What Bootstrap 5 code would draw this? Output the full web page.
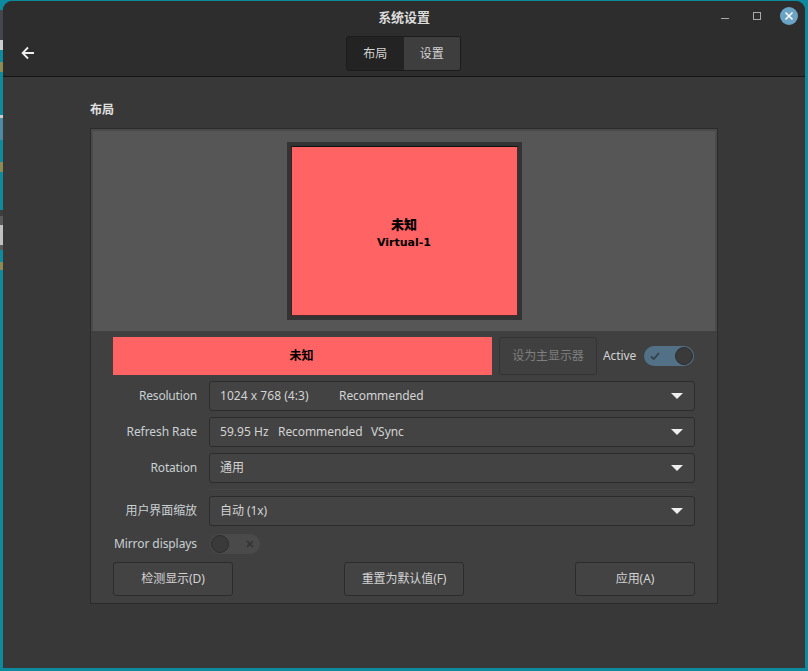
<!DOCTYPE html>
<html lang="zh">
<head>
<meta charset="utf-8">
<title>系统设置</title>
<link href="https://cdn.jsdelivr.net/npm/bootstrap@5.3.0/dist/css/bootstrap.min.css" rel="stylesheet">
<style>
html,body{height:671px;overflow:hidden}
body{background:linear-gradient(#0e8a9e 0 10px,#43464f 10px 40px,#c9cdd0 40px 50px,#0e8a9e 50px 62px,#8d8a55 62px 72px,#0e8a9e 72px 115px,#c9cdd0 115px 118px,#4f8aa5 118px 140px,#0e8a9e 140px 162px,#8d8a55 162px 172px,#0e8a9e 172px 210px,#3d3d3d 210px 216px,#5a5a5a 216px 225px,#c0c0c0 225px 245px,#5a5a5a 245px 250px,#0e8a9e 250px 262px,#8d8a55 262px 270px,#0e8a9e 270px) left top/3px 100% no-repeat #0e8a9e;font-family:"Noto Sans","Noto Sans CJK SC",sans-serif;font-size:12px;letter-spacing:-.08px;color:#d3d3d3;padding:1px 3px 3px 3px}
.win{height:667px;background:#383838;border-radius:9px 9px 0 0;overflow:hidden}
.hdr{height:76px;background:#2d2d2d;border-bottom:1px solid #141414;position:relative}
.ttl{font-weight:700;font-size:13px;color:#dcdcdc;padding-top:6px;line-height:20px}
.seg{width:115px;height:35px;margin:9px 0 0 343px;background:#232323;border:1px solid #1c1c1c;border-radius:3px;overflow:hidden}
.seg-i{flex:1 1 0;color:#d3d3d3}
.seg-on{background:#3e3e3e}
.back{position:absolute;left:18px;top:45px}
.wbtns{position:absolute;right:0;top:0}
.mn{position:absolute;left:87px;top:100px;font-weight:700;color:#e0e0e0;line-height:18px}
.pnl{position:absolute;left:87px;top:127px;width:628px;height:476px;background:#404040;border:1px solid #2b2b2b}
.prev{height:202px;background:#565656;border:2px solid #4a4a4a;border-bottom:0;padding-top:11px}
.mon{width:235px;height:178px;background:#333;padding:4px}
.scr{height:100%;background:#ff6363;border-style:solid;border-width:1px;border-color:#111 #4a2a2a #4a2a2a #3a2020;color:#000;font-weight:700}
.scr b{font-size:13px;line-height:24px;letter-spacing:0}
.scr i{font-style:normal;font-size:11px;line-height:14px;letter-spacing:0;font-family:"DejaVu Sans",sans-serif}
.body-p{padding:6px 22px 0 22px}
.bar{width:379px;height:38px;padding-right:2px;background:#ff6363;color:#000;font-weight:700}
.btnx{background:#434343;border:1px solid #2c2c2c;border-radius:3px;color:#d3d3d3;font-size:12px;padding:0;letter-spacing:inherit}
.pri{width:98px;height:38px;margin-left:7px;background:#404040;color:#7f7f7f;border-color:#333}
.act{margin-left:6px;width:41px}
.sw{width:50px;height:20px;border-radius:10px;position:relative}
.sw-on{background:#527186}
.sw-off{background:#4a4a4a;margin-left:1px}
.kn{position:absolute;top:1px;width:18px;height:18px;border-radius:50%;background:#3a3a3a;border:1px solid #2c2c2c}
.rw{height:30px}
.lb{width:84px;text-align:right;color:#c9d0d3;margin-right:12px;white-space:nowrap}
.lb-t{letter-spacing:-.18px}
.num{letter-spacing:.04px}
.sel{width:486px;height:30px;background:#434343;border:1px solid #2c2c2c;border-radius:3px;padding:0 11px 0 10px;color:#d3d3d3}
.tri{width:0;height:0;border-left:6px solid transparent;border-right:6px solid transparent;border-top:6px solid #eee}
.act-b{width:120px;height:34px}
.rule{height:1px;background:#474747;margin:6px 0 6px 96px}
</style>
</head>
<body>
<div class="win position-relative">
  <div class="hdr text-center">
    <div class="ttl">系统设置</div>
    <div class="seg d-flex">
      <div class="seg-i d-flex align-items-center justify-content-center">布局</div>
      <div class="seg-i seg-on d-flex align-items-center justify-content-center">设置</div>
    </div>
    <svg class="back" width="14" height="14" viewBox="0 0 14 14" fill="none" stroke="#eee" stroke-width="1.8"><path d="M13 7H2M7 1.5 1.6 7 7 12.5"/></svg>
    <svg class="wbtns" width="100" height="30" viewBox="0 0 100 30" fill="none">
      <path d="M16 17.5h8" stroke="#a8a8a8" stroke-width="1"/>
      <rect x="48.5" y="11.5" width="7" height="7" stroke="#a8a8a8"/>
      <circle cx="84" cy="15" r="9" fill="#6ba3c5"/>
      <path d="M80.5 11.5l7 7M87.5 11.5l-7 7" stroke="#fff" stroke-width="1.5"/>
    </svg>
  </div>
  <div class="mn">布局</div>
  <div class="pnl">
    <div class="prev"><div class="mon mx-auto"><div class="scr d-flex flex-column align-items-center justify-content-center"><b>未知</b><i>Virtual-1</i></div></div></div>
    <div class="body-p">
      <div class="d-flex align-items-center">
        <div class="bar d-flex align-items-center justify-content-center">未知</div>
        <button class="btnx pri" disabled>设为主显示器</button>
        <div class="act">Active</div>
        <div class="sw sw-on">
          <svg class="position-absolute" style="left:6px;top:5px" width="10" height="10" viewBox="0 0 10 10" fill="none" stroke="#33414b" stroke-width="1.8"><path d="M1 5.5 3.8 8 9 2"/></svg>
          <span class="kn" style="right:1px"></span>
        </div>
      </div>
      <div class="rw d-flex align-items-center" style="margin-top:6px">
        <div class="lb lb-t">Resolution</div>
        <div class="sel d-flex align-items-center"><span class="num" style="width:119px">1024 x 768 (4:3)</span><span>Recommended</span><span class="tri ms-auto"></span></div>
      </div>
      <div class="rw d-flex align-items-center" style="margin-top:6px">
        <div class="lb">Refresh Rate</div>
        <div class="sel d-flex align-items-center"><span class="num" style="width:58px">59.95 Hz</span><span style="width:93px">Recommended</span><span>VSync</span><span class="tri ms-auto"></span></div>
      </div>
      <div class="rw d-flex align-items-center" style="margin-top:6px">
        <div class="lb lb-t">Rotation</div>
        <div class="sel d-flex align-items-center"><span>通用</span><span class="tri ms-auto"></span></div>
      </div>
      <div class="rule"></div>
      <div class="rw d-flex align-items-center">
        <div class="lb">用户界面缩放</div>
        <div class="sel d-flex align-items-center"><span>自动 (1x)</span><span class="tri ms-auto"></span></div>
      </div>
      <div class="d-flex align-items-center" style="margin-top:8px;height:20px">
        <div class="lb">Mirror displays</div>
        <div class="sw sw-off">
          <span class="kn" style="left:1px"></span>
          <svg class="position-absolute" style="right:6px;top:6px" width="8" height="8" viewBox="0 0 8 8" fill="none" stroke="#333" stroke-width="1.6"><path d="M1 1l6 6M7 1 1 7"/></svg>
        </div>
      </div>
      <div class="d-flex justify-content-between" style="margin-top:8px">
        <button class="btnx act-b">检测显示(D)</button>
        <button class="btnx act-b">重置为默认值(F)</button>
        <button class="btnx act-b">应用(A)</button>
      </div>
    </div>
  </div>
</div>
<script src="https://cdn.jsdelivr.net/npm/bootstrap@5.3.0/dist/js/bootstrap.bundle.min.js"></script>
</body>
</html>
